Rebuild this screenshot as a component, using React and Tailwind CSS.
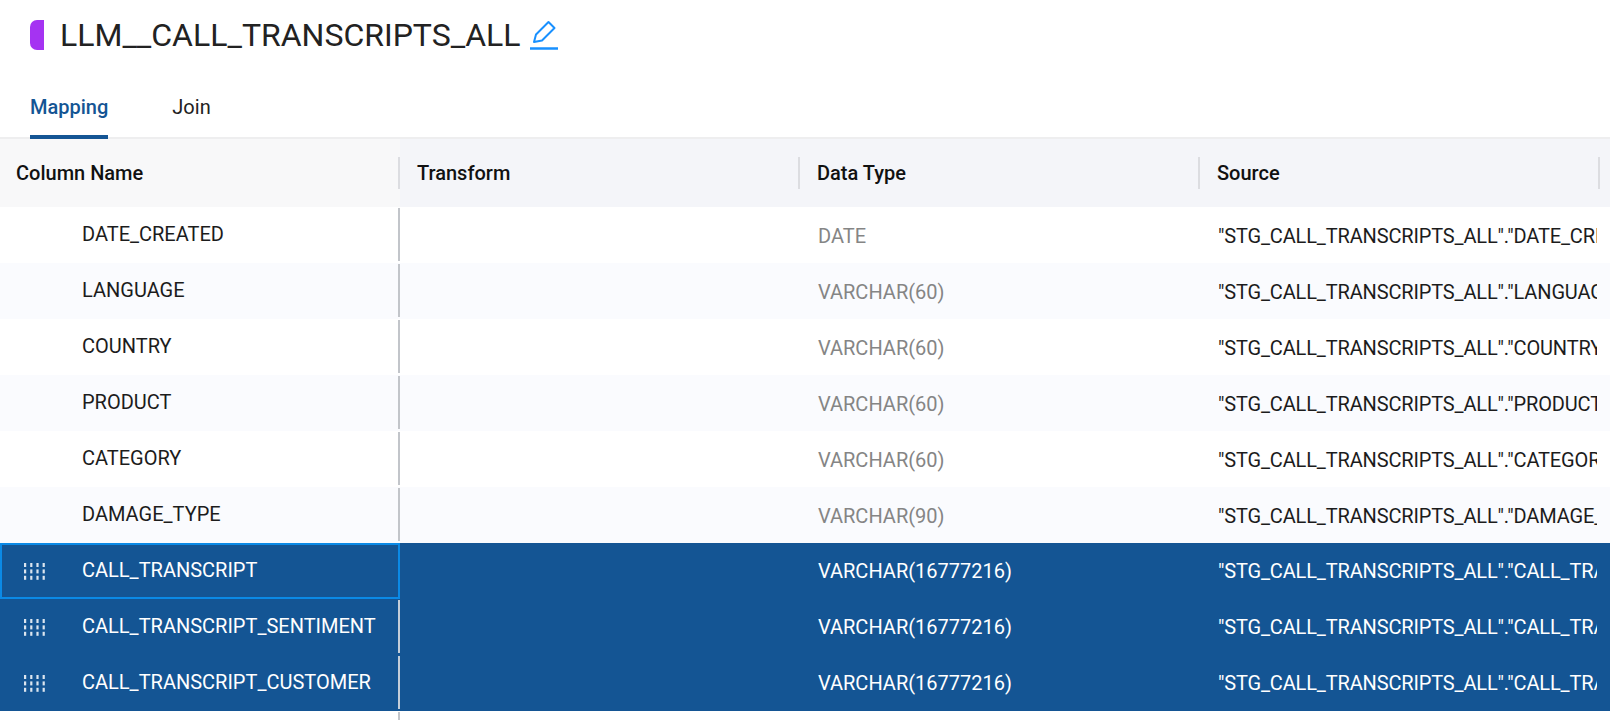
import React from "react";

const rows = [
  { name: "DATE_CREATED", type: "DATE", col: "DATE_CREATED" },
  { name: "LANGUAGE", type: "VARCHAR(60)", col: "LANGUAGE" },
  { name: "COUNTRY", type: "VARCHAR(60)", col: "COUNTRY" },
  { name: "PRODUCT", type: "VARCHAR(60)", col: "PRODUCT" },
  { name: "CATEGORY", type: "VARCHAR(60)", col: "CATEGORY" },
  { name: "DAMAGE_TYPE", type: "VARCHAR(90)", col: "DAMAGE_TYPE" },
  { name: "CALL_TRANSCRIPT", type: "VARCHAR(16777216)", col: "CALL_TRANSCRIPT", selected: true, focused: true },
  { name: "CALL_TRANSCRIPT_SENTIMENT", type: "VARCHAR(16777216)", col: "CALL_TRANSCRIPT_SENTIMENT", selected: true },
  { name: "CALL_TRANSCRIPT_CUSTOMER", type: "VARCHAR(16777216)", col: "CALL_TRANSCRIPT_CUSTOMER", selected: true },
];

function Grip() {
  const dots = [];
  for (let x = 0; x < 4; x++) {
    for (let y = 0; y < 3; y++) {
      dots.push(<rect key={x + "-" + y} x={x * 6.2} y={y * 6.4} width="2.2" height="4" fill="#fff" opacity="0.85" />);
    }
  }
  return (
    <svg width="22" height="17" viewBox="0 0 22 17" className="shrink-0">
      {dots}
    </svg>
  );
}

function Row({ row, index }) {
  const bg = row.selected ? "bg-[#145594]" : index % 2 === 0 ? "bg-white" : "bg-[#fafbfe]";
  return (
    <div className={`flex h-14 ${bg}`}>
      <div
        className={`flex w-[400px] shrink-0 items-center ${
          row.focused ? "border-2 border-[#0b8ae6]" : ""
        }`}
      >
        <div className={`flex h-[52px] flex-1 items-center overflow-hidden pb-[3px] ${row.focused ? "pl-[22px]" : "pl-6"}`}>
          <div className="flex w-[58px] shrink-0 pt-[3px]">{row.selected && <Grip />}</div>
          <span className={`whitespace-nowrap text-[20px] ${row.selected ? "text-white" : "text-[#1c1c1c]"}`}>{row.name}</span>
        </div>
        {!row.focused && (
          <div className={`mt-px h-[53px] w-0.5 shrink-0 self-start ${row.selected ? "bg-[#c4cdd8]" : "bg-[#c2c5ca]"}`} />
        )}
      </div>
      <div className="w-[400px] shrink-0" />
      <div className={`flex w-[400px] shrink-0 items-center pl-[18px] ${row.selected ? "" : "pt-0.5"}`}>
        <span className={`text-[20px] ${row.selected ? "text-white" : "text-[#858585]"}`}>{row.type}</span>
      </div>
      <div className={`flex w-[397px] shrink-0 items-center overflow-hidden pl-[18px] ${row.selected ? "" : "pt-0.5"}`}>
        <span className={`whitespace-nowrap text-[20px] tracking-[-0.15px] ${row.selected ? "text-white" : "text-[#1c1c1c]"}`}>
          "STG_CALL_TRANSCRIPTS_ALL"."{row.col}"
        </span>
      </div>
    </div>
  );
}

function HeaderCell({ label, first }) {
  return (
    <div
      className={`flex w-[400px] shrink-0 items-center justify-between ${
        first ? "bg-[#f8f8f9] pl-4" : "bg-[#f4f5f9] pl-[17px]"
      }`}
    >
      <span className="text-[20px] font-medium text-[#111]">{label}</span>
      <div className="h-8 w-0.5 bg-[#dcdde1]" />
    </div>
  );
}

export default function App() {
  return (
    <div className="h-[720px] w-[1610px] overflow-hidden bg-white font-['Roboto',sans-serif]">
      <div className="flex h-[70px] items-center pl-[30px]">
        <div className="h-[30px] w-[14px] rounded-l-[7px] bg-[#a533f2]" />
        <h1 className="ml-4 text-[32px] font-normal leading-none text-[#222]">LLM__CALL_TRANSCRIPTS_ALL</h1>
        <svg width="30" height="32" viewBox="0 0 30 32" fill="none" stroke="#1890ff" strokeWidth="2" className="ml-[9px]">
          <path d="M5 23 L7 15.5 L19.5 3 L25.5 9 L13 21.5 Z" strokeLinejoin="round" />
          <path d="M1 29.5 H29" strokeWidth="2.5" />
        </svg>
      </div>
      <div className="flex h-[69px] items-end gap-16 border-b-2 border-[#eeeeef] pl-[30px]">
        <div className="-mb-0.5 flex h-[47px] items-start border-b-4 border-[#145594] text-[20px] font-medium text-[#145594]">
          Mapping
        </div>
        <div className="-mb-0.5 flex h-[47px] items-start text-[20px] text-[#222]">Join</div>
      </div>
      <div className="flex h-[68px]">
        <HeaderCell label="Column Name" first />
        <HeaderCell label="Transform" />
        <HeaderCell label="Data Type" />
        <HeaderCell label="Source" />
        <div className="flex-1 bg-[#f4f5f9]" />
      </div>
      {rows.map((row, i) => (
        <Row key={row.name} row={row} index={i} />
      ))}
      <div className="ml-[398px] mt-px h-2 w-0.5 bg-[#c2c5ca]" />
    </div>
  );
}
